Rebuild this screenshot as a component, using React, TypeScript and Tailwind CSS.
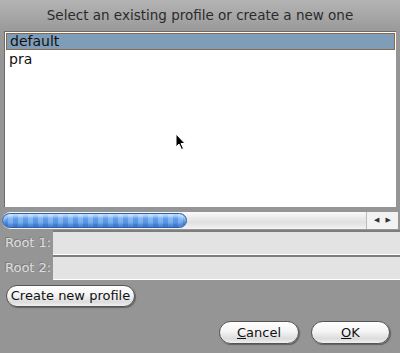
import React from "react";

const font = { fontFamily: '"DejaVu Sans", Verdana, sans-serif' };

function PillButton({ children, className }: { children: React.ReactNode; className?: string }) {
  return (
    <button
      className={
        "flex items-center justify-center whitespace-nowrap rounded-full border border-[#555] bg-[linear-gradient(#ffffff_0%,#f4f4f4_45%,#dcdcdc_80%,#f0f0f0_100%)] px-0 text-[13px] text-[#111] shadow-[1px_1px_1px_rgba(0,0,0,0.35)] " +
        (className ?? "")
      }
    >
      {children}
    </button>
  );
}

function RootField({ label }: { label: string }) {
  return (
    <div className="flex h-[25px] items-center">
      <span className="w-[53px] whitespace-nowrap pl-[5px] text-[13px] text-[#dedede] [text-shadow:-1px_-1px_0_#7a7a7a]">{label}</span>
      <div className="h-full flex-1 border-t-2 border-[#7d7d7d] border-b border-b-white bg-[#e3e3e3]" />
    </div>
  );
}

export default function App() {
  return (
    <div
      className="relative flex h-[353px] w-[400px] flex-col overflow-hidden bg-[linear-gradient(#b4b4b4_0px,#9a9a9a_30px,#959595_60px)]"
      style={font}
    >
      <div className="flex h-[31px] items-center justify-center text-[13.5px] text-[#2b2b2b]">
        Select an existing profile or create a new one
      </div>
      <div className="mx-[4px] h-[176px] border-l border-t border-[#6c6c6c] bg-white pt-[1px] text-[14px] text-[#111]">
        <div className="mx-[1px] flex h-[17px] items-center border border-[#8c6a46] bg-[#7f9db9] pl-[3px]">default</div>
        <div className="flex h-[18px] items-center pl-[4px]">pra</div>
      </div>
      <div className="mx-[2px] mt-[5px] flex h-[17px] items-center rounded-l-full bg-[linear-gradient(#fafafa,#e0e0e0_60%,#f3f3f3)]">
        <div className="h-[15px] w-[185px] rounded-full border border-[#2c5fae] bg-[repeating-linear-gradient(90deg,#5a9ae8_0px,#5a9ae8_5px,#7eb4f0_5px,#7eb4f0_10px)] shadow-[inset_0_3px_3px_rgba(255,255,255,0.6),inset_0_-3px_3px_rgba(30,80,170,0.5)]" />
        <div className="flex-1" />
        <div className="flex h-full w-[32px] items-center justify-center gap-[6px] border-l border-[#bbb] bg-[#f2f2f2] text-[7px] text-[#333]">
          <span>◀</span>
          <span>▶</span>
        </div>
      </div>
      <div className="mt-[1px] flex flex-col gap-0">
        <RootField label="Root 1:" />
        <RootField label="Root 2:" />
      </div>
      <div className="mt-[5px] pl-[6px]">
        <PillButton className="h-[22px] w-[129px]">Create new profile</PillButton>
      </div>
      <div className="mt-[14px] flex justify-end gap-[12px] pr-[10px]">
        <PillButton className="h-[23px] w-[80px]">
          <span><span className="underline">C</span>ancel</span>
        </PillButton>
        <PillButton className="h-[23px] w-[79px]">
          <span><span className="underline">O</span>K</span>
        </PillButton>
      </div>
      <svg className="absolute left-[175px] top-[133px]" width="12" height="18" viewBox="0 0 12 18">
        <path d="M1 1 L1 14 L4 11 L6.5 16.5 L8.5 15.5 L6 10.5 L10 10.5 Z" fill="#000" stroke="#fff" strokeWidth="1" />
      </svg>
    </div>
  );
}
